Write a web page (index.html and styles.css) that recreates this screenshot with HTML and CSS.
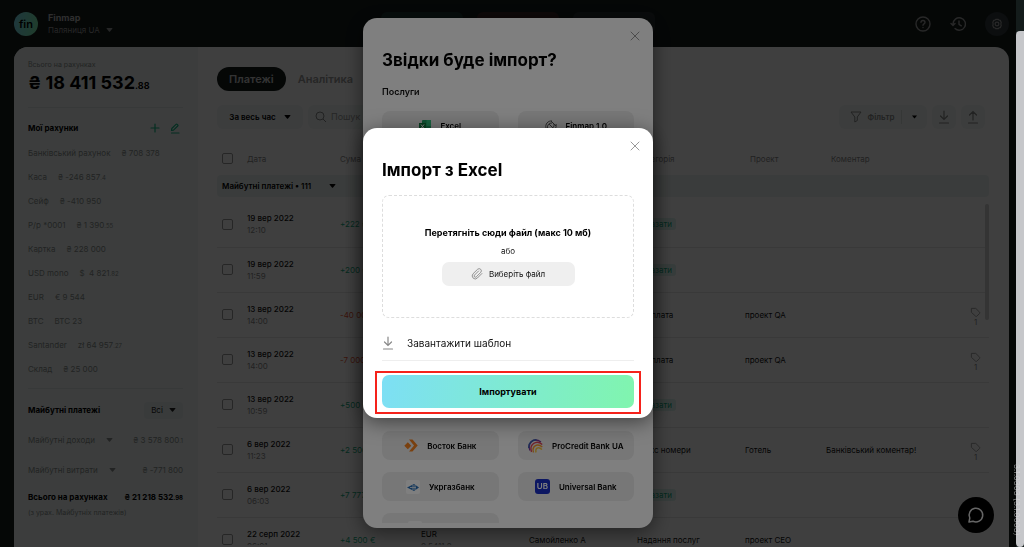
FILE: index.html
```html
<!DOCTYPE html>
<html lang="uk">
<head>
  <meta charset="UTF-8" />
  <meta name="viewport" content="width=device-width, initial-scale=1.0" />
  <title>Finmap</title>
  <link rel="stylesheet" href="styles.css">
</head>
<body>
  <svg width="0" height="0" class="sprite" aria-hidden="true">
    <symbol id="caret" viewBox="0 0 8 5"><path d="M.5 0h7q.6 0 .2.5L4.4 4.6q-.4.4-.8 0L.3.5Q0 0 .5 0z" fill="currentColor"/></symbol>
    <symbol id="close" viewBox="0 0 10 10"><path d="M1 1l8 8M9 1L1 9" fill="none" stroke="currentColor" stroke-linecap="round"/></symbol>
    <symbol id="download" viewBox="0 0 12 14"><path d="M6 1v8.500M2.500 6L6 9.500 9.500 6M1.500 13h9" fill="none" stroke="currentColor" stroke-width="1.200" stroke-linecap="round"/></symbol>
    <symbol id="upload" viewBox="0 0 12 14"><path d="M6 10V1.500M2.500 5L6 1.500 9.500 5M1.500 13h9" fill="none" stroke="currentColor" stroke-width="1.200" stroke-linecap="round"/></symbol>
    <symbol id="tag" viewBox="0 0 12 12"><path d="M1.500 1.500h4.800l4.200 4.200q.6.700 0 1.300l-3 3q-.7.600-1.400 0L1.500 5.800z" fill="none" stroke="currentColor"/></symbol>
  </svg>

  <div class="app">
    <header>
      <div class="logo">fin</div>
      <div class="company">
        <b>Finmap</b>
        <button>Паляниця UA <svg class="caret"><use href="#caret"/></svg></button>
      </div>
      <div class="quick">
        <span class="income"></span>
        <span class="expense"></span>
        <span class="transfer"></span>
      </div>
      <div class="tools">
        <button aria-label="Допомога"><svg width="16" height="16" viewBox="0 0 16 16" fill="none" stroke="currentColor" stroke-width="1.400" stroke-linecap="round"><circle cx="8" cy="8" r="7"/><path d="M6 6.300Q6 4.500 8 4.500t2 1.800q0 1-1 1.600T8 9.300"/><path d="M8 11.400v.1"/></svg></button>
        <button aria-label="Історія"><svg width="16" height="16" viewBox="0 0 16 16" fill="none" stroke="currentColor" stroke-width="1.400" stroke-linecap="round" stroke-linejoin="round"><path d="M3 8a6.200 6.200 0 1 1 2 4.600M1 7.500l2 2 2-2M9 5v3.300l2.300 1.500"/></svg></button>
        <button class="gear" aria-label="Налаштування"><svg width="12" height="12" viewBox="0 0 14 14" fill="none" stroke="currentColor" stroke-width="1.400" stroke-linejoin="round"><path d="M5.500 1.500h3l.9 1.100 1.500.2 1 2.300-.4 1.900.4 1.900-1 2.300-1.500.2-.9 1.100h-3l-.9-1.100-1.500-.2-1-2.300.4-1.900-.4-1.900 1-2.300 1.500-.2z"/><circle cx="7" cy="7" r="2.200"/></svg></button>
      </div>
    </header>

    <div class="panel">
      <aside>
        <div class="total">
          <span>Всього на рахунках</span>
          <strong>₴ 18 411 532<small>.88</small></strong>
        </div>
        <div class="side-head">
          <h2>Мої рахунки</h2>
          <button aria-label="Додати"><svg width="10" height="10" viewBox="0 0 10 10"><path d="M5 1v8M1 5h8" stroke="currentColor" stroke-width="1.200" stroke-linecap="round"/></svg></button>
          <button aria-label="Редагувати"><svg width="10" height="11" viewBox="0 0 10 11" fill="none" stroke="currentColor" stroke-width="1.200" stroke-linecap="round" stroke-linejoin="round"><path d="M1.500 7.500l.3-2L6 1.300q.6-.6 1.200 0l.5.500q.6.600 0 1.200L3.500 7.200zM1.500 10h7.500"/></svg></button>
        </div>
        <ul class="accounts">
          <li><span>Банківський рахунок</span><span>₴ 708 378</span></li>
          <li><span>Каса</span><span>₴ -246 857<small>.4</small></span></li>
          <li><span>Сейф</span><span>₴ -410 950</span></li>
          <li><span>Р/р *0001</span><span>₴ 1 390<small>.55</small></span></li>
          <li><span>Картка</span><span>₴ 228 000</span></li>
          <li><span>USD mono</span><span>$&nbsp; 4 821<small>.82</small></span></li>
          <li><span>EUR</span><span>€ 9 544</span></li>
          <li><span>BTC</span><span>BTC 23</span></li>
          <li><span>Santander</span><span>zł 64 957<small>.27</small></span></li>
          <li><span>Склад</span><span>₴ 25 000</span></li>
        </ul>
        <div class="future">
          <div class="future-head">
            <h2>Майбутні платежі</h2>
            <button>Всі <svg class="caret"><use href="#caret"/></svg></button>
          </div>
          <div class="future-row"><span>Майбутні доходи</span><svg class="caret"><use href="#caret"/></svg><span class="sum">₴ 3 578 800<small>.1</small></span></div>
          <div class="future-row"><span>Майбутні витрати</span><svg class="caret"><use href="#caret"/></svg><span class="sum">₴ -771 800</span></div>
          <div class="future-total"><b>Всього на рахунках</b><b>₴ 21 218 532<small>.98</small></b></div>
          <p>(з урах. Майбутніх платежів)</p>
        </div>
      </aside>

      <main>
        <nav>
          <a href="#" class="active">Платежі</a>
          <a href="#">Аналітика</a>
        </nav>
        <div class="filters">
          <button class="period">За весь час <svg class="caret"><use href="#caret"/></svg></button>
          <label class="search">
            <svg width="12" height="12" viewBox="0 0 12 12" fill="none" stroke="currentColor"><circle cx="5" cy="5" r="4"/><path d="M8 8l3 3"/></svg>
            <input type="text" placeholder="Пошук" aria-label="Пошук">
          </label>
          <button class="filter">
            <svg width="12" height="12" viewBox="0 0 12 12" fill="none" stroke="currentColor" stroke-linejoin="round"><path d="M1 1h10L7.300 6v3.500L4.800 11V6z"/></svg>
            Фільтр
            <i></i>
            <svg class="caret"><use href="#caret"/></svg>
          </button>
          <button class="square" aria-label="Імпорт"><svg width="12" height="14"><use href="#download"/></svg></button>
          <button class="square" aria-label="Експорт"><svg width="12" height="14"><use href="#upload"/></svg></button>
        </div>

        <div class="payments">
          <table>
            <colgroup>
              <col class="c-check"><col class="c-date"><col class="c-sum"><col class="c-wide"><col class="c-wide"><col class="c-wide"><col class="c-project"><col><col class="c-tag">
            </colgroup>
            <thead>
              <tr>
                <th><input type="checkbox" aria-label="Вибрати всі"></th>
                <th>Дата</th>
                <th>Сума</th>
                <th></th>
                <th></th>
                <th>Категорія</th>
                <th class="shift">Проект</th>
                <th class="shift">Коментар</th>
                <th></th>
              </tr>
              <tr class="group">
                <td colspan="9"><div>Майбутні платежі • 111 <svg class="caret"><use href="#caret"/></svg></div></td>
              </tr>
            </thead>
            <tbody>
              <tr>
                <td><input type="checkbox" aria-label="Вибрати"></td>
                <td><b>19 вер 2022</b><span>12:10</span></td>
                <td class="plus">+222 ₴</td><td></td><td></td>
                <td><a href="#" class="chip">Вказати</a></td><td></td><td></td><td></td>
              </tr>
              <tr>
                <td><input type="checkbox" aria-label="Вибрати"></td>
                <td><b>19 вер 2022</b><span>11:59</span></td>
                <td class="plus">+200 ₴</td><td></td><td></td>
                <td><a href="#" class="chip">Вказати</a></td><td></td><td></td><td></td>
              </tr>
              <tr>
                <td><input type="checkbox" aria-label="Вибрати"></td>
                <td><b>13 вер 2022</b><span>14:00</span></td>
                <td class="minus">-40 000 ₴</td><td></td><td></td>
                <td>Зарплата</td><td>проект QA</td><td></td>
                <td class="tag"><svg width="11" height="11"><use href="#tag"/></svg><span>1</span></td>
              </tr>
              <tr>
                <td><input type="checkbox" aria-label="Вибрати"></td>
                <td><b>13 вер 2022</b><span>14:00</span></td>
                <td class="minus">-7 000 ₴</td><td></td><td></td>
                <td>Зарплата</td><td>проект QA</td><td></td>
                <td class="tag"><svg width="11" height="11"><use href="#tag"/></svg><span>1</span></td>
              </tr>
              <tr>
                <td><input type="checkbox" aria-label="Вибрати"></td>
                <td><b>13 вер 2022</b><span>10:59</span></td>
                <td class="plus">+500 ₴</td><td></td><td></td>
                <td><a href="#" class="chip">Вказати</a></td><td></td><td></td><td></td>
              </tr>
              <tr>
                <td><input type="checkbox" aria-label="Вибрати"></td>
                <td><b>6 вер 2022</b><span>11:23</span></td>
                <td class="plus">+2 500 ₴</td><td></td><td></td>
                <td>Люкс номери</td><td>Готель</td><td>Банківський коментар!</td>
                <td class="tag"><svg width="11" height="11"><use href="#tag"/></svg><span>1</span></td>
              </tr>
              <tr>
                <td><input type="checkbox" aria-label="Вибрати"></td>
                <td><b>6 вер 2022</b><span>06:03</span></td>
                <td class="plus">+7 777 ₴</td><td></td><td></td>
                <td><a href="#" class="chip">Вказати</a></td><td></td><td></td><td></td>
              </tr>
              <tr>
                <td><input type="checkbox" aria-label="Вибрати"></td>
                <td><b>22 серп 2022</b><span>06:01</span></td>
                <td class="plus">+4 500 €</td>
                <td>EUR<span>0.5411.2</span></td>
                <td>Самойленко А</td>
                <td>Надання послуг</td><td>проект CEO</td><td></td><td></td>
              </tr>
            </tbody>
          </table>
          <div class="thumb"></div>
        </div>
      </main>
    </div>
  </div>

  <div class="overlay">
    <section class="modal sources">
      <button class="close" aria-label="Закрити"><svg width="10" height="10"><use href="#close"/></svg></button>
      <h1>Звідки буде імпорт?</h1>
      <h3>Послуги</h3>
      <div class="source-grid">
        <button>
          <svg width="12" height="12" viewBox="0 0 12 12"><rect x="3" width="9" height="12" rx="1" fill="#21a366"/><path d="M7.500 0H12v6H7.500z" fill="#33c481"/><rect y="3" width="7" height="7" fill="#107c41"/><path d="M2 4.500l3 4M5 4.500l-3 4" stroke="#fff"/></svg>
          Excel
        </button>
        <button>
          <svg width="12" height="12" viewBox="0 0 12 12" fill="none" stroke="#555"><path d="M1 8a5.500 5.500 0 0 1 6-7M3 9a4 4 0 0 1 4-6M11 4a5.500 5.500 0 0 1-6 7M9 4a4 4 0 0 1-4 5M4 4l4 4M6 1l5 5"/></svg>
          Finmap 1.0
        </button>
      </div>
      <div class="source-grid banks">
        <button>
          <svg width="14" height="13" viewBox="0 0 14 13"><path d="M3.800 3.200l3.500 3.500-3.500 3.500L.3 6.700zM5 .5h3.500l5.200 6-5.200 6H5l5-6z" fill="#f58220"/></svg>
          Восток Банк
        </button>
        <button>
          <svg width="15" height="14" viewBox="0 0 15 14" fill="none" stroke-width="1.400"><path d="M2 11.500C-1 4 6-2 13 3" stroke="#7a3a9a"/><path d="M3.500 13C1 6 8 0 14.200 5.500" stroke="#e0455a"/><path d="M5.500 13.500C3.500 7.500 9 3.500 14.300 8" stroke="#f59a2f"/><path d="M8 13.500C7 9.500 10 7 14 10.500" stroke="#f5c33b"/><path d="M.8 9C.3 4 4 .8 8.500.8" stroke="#3a5fb0"/></svg>
          ProCredit Bank UA
        </button>
        <button>
          <svg width="14" height="14" viewBox="0 0 14 14"><rect width="14" height="14" rx="2" fill="#fff"/><path d="M1 7.500L8 4l5 3.500L8 11z" fill="#2a71b8"/><path d="M4 7.500h6M6 6l4 0M6 9h4" stroke="#fff" stroke-width=".8"/></svg>
          Укргазбанк
        </button>
        <button>
          <span class="ub">UB</span>
          Universal Bank
        </button>
        <button aria-label="Банк"><svg width="14" height="14" viewBox="0 0 14 14"><rect width="14" height="14" rx="2" fill="#fff"/></svg><span class="stub"></span></button>
      </div>
    </section>
  </div>

  <div class="overlay">
    <section class="modal excel">
      <button class="close" aria-label="Закрити"><svg width="10" height="10"><use href="#close"/></svg></button>
      <h1>Імпорт з Excel</h1>
      <div class="dropzone">
        <b>Перетягніть сюди файл (макс 10 мб)</b>
        <span>або</span>
        <button>
          <svg width="12" height="12" viewBox="0 0 12 12" fill="none" stroke="#888" stroke-width=".9" stroke-linecap="round"><path d="M10.900 5.500L6.400 10Q4.300 12 2.200 10.200.1 8 2 5.800L6.700 1.200q1.600-1.200 3 .1 1.400 1.500.1 3L5.200 8.900q-.9.700-1.700 0-.8-.9 0-1.800L7.600 3"/></svg>
          Виберіть файл
        </button>
      </div>
      <a href="#" class="template"><svg width="12" height="14"><use href="#download"/></svg>Завантажити шаблон</a>
      <button class="import">Імпортувати</button>
    </section>
  </div>

  <button class="chat" aria-label="Чат"><svg width="18" height="18" viewBox="0 0 18 18" fill="none" stroke="currentColor" stroke-width="1.500" stroke-linejoin="round"><path d="M2 16l.8-4A6.800 6.800 0 1 1 6 15.200z"/></svg></button>
  <div class="scrollbar"></div>
  <div class="version">3.1.0303 (3.1.0003)</div>
</body>
</html>
```
FILE: styles.css
```css
* {
  box-sizing: border-box;
}
body {
  margin: 0;
  height: 100vh;
  overflow: hidden;
  font-family: Inter, 'Liberation Sans', sans-serif;
  font-size: 8px;
  line-height: 12px;
  color: #111;
  background: #141c1b;
}
h1, h2, h3, p, ul {
  margin: 0;
  padding: 0;
}
button, input {
  font: inherit;
  color: inherit;
  border: none;
  background: none;
  padding: 0;
}
button {
  display: flex;
  align-items: center;
  justify-content: center;
}
a {
  color: inherit;
  text-decoration: none;
}
svg {
  flex: none;
}
.sprite {
  position: absolute;
}
.caret {
  width: 7px;
  height: 4px;
}
.app {
  display: flex;
  flex-direction: column;
  height: 100vh;
  padding: 0 15px 0 14px;
}

/* header */
header {
  display: flex;
  align-items: center;
  height: 47px;
  flex: none;
  position: relative;
}
.logo {
  width: 24px;
  height: 24px;
  border-radius: 50%;
  background: linear-gradient(100deg, #7ddff5, #80f5ae);
  color: #000;
  font-size: 11px;
  font-weight: 600;
  line-height: 24px;
  text-align: center;
}
.company {
  margin-left: 10px;
  color: #999;
}
.company b {
  display: block;
  font-size: 9px;
  color: #bbb;
}
.company button {
  gap: 6px;
}
.quick {
  position: absolute;
  left: 367px;
  top: 12px;
  display: flex;
  gap: 14px;
}
.quick span {
  width: 82px;
  height: 22px;
  border-radius: 6px;
}
.quick .income {
  background: #1c3834;
}
.quick .expense {
  background: #3a2424;
}
.quick .transfer {
  background: #262e30;
}
.tools {
  margin-left: auto;
  display: flex;
  align-items: center;
  gap: 19px;
  color: #a0a0a0;
}
.tools .gear {
  width: 24px;
  height: 24px;
  border-radius: 50%;
  background: #30383c;
}

/* sidebar */
.panel {
  flex: 1;
  min-height: 0;
  display: flex;
  background: #fff;
  border-radius: 14px 14px 0 0;
  overflow: hidden;
}
aside {
  width: 184px;
  flex: none;
  padding: 12px 15px 0 14px;
  background: #f0f7f5;
  color: #8a8f8e;
}
aside h2 {
  font-size: 8px;
  font-weight: 700;
  color: #000;
}
aside small {
  font-size: 6px;
}
.total {
  height: 49px;
  border-bottom: 1px solid #dfe6e4;
  font-size: 7px;
}
.total strong {
  display: block;
  font-size: 18px;
  line-height: 24px;
  color: #000;
}
.total small {
  font-size: 9px;
}
.side-head {
  display: flex;
  align-items: center;
  gap: 10px;
  height: 33px;
  padding: 7px 3px 0 0;
  color: #12b886;
}
.side-head h2 {
  flex: 1;
}
.accounts {
  list-style: none;
  padding-bottom: 7px;
  border-bottom: 1px solid #dfe6e4;
}
.accounts li {
  display: flex;
  align-items: center;
  gap: 11px;
  height: 24px;
}
.future-head {
  display: flex;
  align-items: center;
  justify-content: space-between;
  height: 42px;
}
.future-head button {
  width: 39px;
  height: 17px;
  gap: 6px;
  border-radius: 4px;
  background: #e6edef;
  color: #222;
}
.future-row {
  display: flex;
  align-items: center;
  gap: 11px;
  height: 30px;
}
.future-row:nth-child(2) {
  margin-top: -6px;
}
.future-row .sum {
  margin-left: auto;
}
.future-total {
  display: flex;
  justify-content: space-between;
  margin-top: 6px;
  color: #000;
}
.future p {
  margin-top: 3px;
  font-size: 7px;
}

/* payments */
main {
  flex: 1;
  min-width: 0;
  display: flex;
  flex-direction: column;
  padding: 20px 20px 2px 19px;
}
nav {
  display: flex;
  gap: 12px;
}
nav a {
  height: 24px;
  font-size: 11px;
  font-weight: 600;
  line-height: 24px;
  color: #999;
}
nav .active {
  padding: 0 12px;
  border-radius: 12px;
  background: #141c1b;
  color: #ccc;
}
.filters {
  display: flex;
  gap: 5px;
  margin-top: 14px;
  padding-right: 4px;
}
.filters > * {
  height: 24px;
  border-radius: 6px;
  background: #f0f7f5;
  color: #888;
}
.filters .period {
  width: 86px;
  gap: 8px;
  background: #f0f4f6;
  color: #000;
  font-weight: 600;
}
.search {
  display: flex;
  align-items: center;
  gap: 4px;
  width: 150px;
  padding-left: 7px;
  font-size: 9px;
}
.search input {
  width: 100px;
}
.search input::placeholder {
  color: #999;
}
.filters .filter {
  width: 88px;
  margin-left: auto;
  gap: 6px;
  font-weight: 600;
}
.filter i {
  width: 1px;
  height: 14px;
  background: #d5dcda;
}
.filter .caret {
  width: 5px;
  margin-left: 4px;
  color: #000;
}
.filters .square {
  width: 24px;
}
.payments {
  flex: 1;
  min-height: 0;
  margin-top: 13px;
  overflow: hidden;
  position: relative;
}
table {
  width: 100%;
  table-layout: fixed;
  border-collapse: collapse;
}
.c-check {
  width: 30px;
}
.c-date {
  width: 93px;
}
.c-sum, .c-project {
  width: 81px;
}
.c-wide {
  width: 108px;
}
.c-tag {
  width: 24px;
}
th, td {
  padding: 0;
  text-align: left;
  font-weight: 400;
  white-space: nowrap;
}
th {
  height: 33px;
  color: #888;
}
th.shift {
  padding-left: 5px;
}
.group div {
  display: flex;
  align-items: center;
  gap: 18px;
  height: 22px;
  padding-left: 5px;
  border-radius: 4px;
  background: #ebf3f1;
  font-weight: 600;
  color: #000;
}
tbody::before {
  content: '';
  display: block;
  height: 5px;
}
tbody tr {
  height: 45px;
  border-bottom: 1px solid #e6e6e6;
}
td b {
  display: block;
  font-weight: 500;
}
td span {
  display: block;
  color: #888;
}
td:first-child, th:first-child {
  padding-left: 5px;
}
.group td:first-child {
  padding-left: 0;
}
input[type="checkbox"] {
  display: block;
  appearance: none;
  width: 11px;
  height: 11px;
  margin: 0;
  border: 1px solid #999;
  border-radius: 2px;
}
.plus {
  color: #12a87c;
}
.minus {
  color: #e8502e;
}
.chip {
  display: inline-block;
  padding: 0 4px;
  border-radius: 3px;
  background: #daf3ec;
  color: #12a87c;
}
.tag {
  color: #999;
}
.tag svg {
  display: block;
  margin: 4px 0 0 5px;
}
.tag span {
  line-height: 8px;
  padding-left: 9px;
}
.thumb {
  position: absolute;
  top: 62px;
  right: 0;
  width: 4px;
  height: 116px;
  border-radius: 2px;
  background: #d0d0d0;
}

/* dialogs */
.overlay {
  position: fixed;
  inset: 0 8px 0 0;
  display: flex;
  align-items: center;
  justify-content: center;
  padding-bottom: 1px;
  background: rgba(0, 0, 0, 0.5);
}
.modal {
  position: relative;
  width: 290px;
  padding: 0 19px;
  border-radius: 14px;
  background: #fff;
  box-shadow: 0 4px 20px rgba(0, 0, 0, 0.5);
}
.modal h1 {
  font-size: 17px;
  font-weight: 700;
  line-height: 24px;
  color: #000;
}
.close {
  position: absolute;
  top: 13px;
  right: 13px;
  color: #999;
}
.sources {
  display: flex;
  flex-direction: column;
  height: calc(100% - 36px);
  padding-top: 30px;
  padding-bottom: 5px;
}
.sources h3 {
  margin: 14px 0 13px;
  font-size: 9px;
  font-weight: 600;
}
.source-grid {
  display: grid;
  grid-template-columns: 1fr 1fr;
  grid-auto-rows: 29px;
  gap: 12px 19px;
}
.source-grid button {
  gap: 9px;
  border-radius: 8px;
  background: #efefef;
  font-weight: 600;
  color: #000;
}
.banks {
  height: 92px;
  margin-top: auto;
  overflow: hidden;
}
.ub {
  width: 15px;
  height: 15px;
  border-radius: 3px;
  background: #1b2fc4;
  color: #fff;
  line-height: 15px;
}
.stub {
  width: 42px;
}
.excel {
  padding-top: 30px;
  padding-bottom: 10px;
}
.dropzone {
  display: flex;
  flex-direction: column;
  align-items: center;
  margin-top: 13px;
  height: 123px;
  padding-top: 31px;
  border: 1px dashed #ddd;
  border-radius: 7px;
}
.dropzone b {
  font-size: 9px;
  font-weight: 700;
  color: #000;
}
.dropzone span {
  margin-top: 6px;
}
.dropzone button {
  width: 133px;
  height: 24px;
  margin-top: 5px;
  gap: 6px;
  border-radius: 7px;
  background: #efefef;
}
.template {
  display: flex;
  align-items: center;
  gap: 13px;
  height: 35px;
  margin-top: 8px;
  border-bottom: 1px solid #eee;
  font-size: 10px;
}
.template svg {
  color: #888;
}
.import {
  position: relative;
  width: 100%;
  height: 33px;
  margin-top: 14px;
  border-radius: 7px;
  background: linear-gradient(100deg, #7ddff5, #80f5ae);
  font-size: 9px;
  font-weight: 700;
  color: #000;
}
.import::after {
  content: '';
  position: absolute;
  inset: -4px -7px -6px;
  border: 2px solid #f5221b;
}

/* fixed extras */
.chat {
  position: fixed;
  right: 30px;
  bottom: 14px;
  width: 36px;
  height: 36px;
  border-radius: 50%;
  background: #000;
  color: #666;
}
.scrollbar {
  position: fixed;
  top: 31px;
  right: 0;
  bottom: 0;
  width: 8px;
  border-radius: 4px 0 4px 4px;
  background: #c6c7ca;
}
.version {
  position: fixed;
  right: 1px;
  bottom: 11px;
  writing-mode: vertical-rl;
  color: rgba(220, 220, 222, 0.6);
}
```
